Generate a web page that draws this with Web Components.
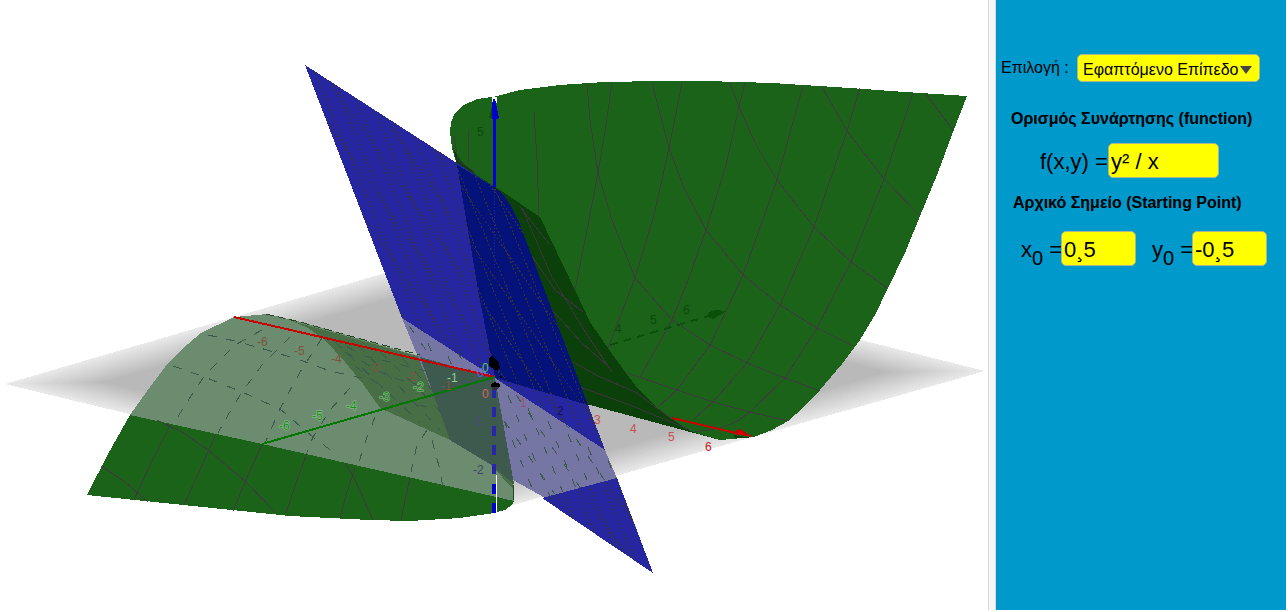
<!DOCTYPE html>
<html lang="el">
<head>
<meta charset="utf-8">
<meta name="viewport" content="width=device-width, initial-scale=1">
<title>Εφαπτόμενο Επίπεδο</title>
<style>
  body {
    margin: 0;
    background: white;
    color: black;
    font-family: "Liberation Sans", Arial, sans-serif;
  }
</style>
</head>
<body>
<split-view>
  <surface-plot></surface-plot>
  <side-panel slot="side">
    <option-picker label="Επιλογή :" options="Εφαπτόμενο Επίπεδο"></option-picker>
    <field-group heading="Ορισμός Συνάρτησης (function)" class="definition">
      <math-field value="y² / x" wide>f(x,y) =</math-field>
    </field-group>
    <field-group heading="Αρχικό Σημείο (Starting Point)" class="start">
      <math-field value="0¸5">x<sub>0</sub> =</math-field>
      <math-field value="-0¸5">y<sub>0</sub> =</math-field>
    </field-group>
  </side-panel>
</split-view>

<script>
class SplitView extends HTMLElement {
  constructor() {
    super();
    this.attachShadow({ mode: "open" }).innerHTML = `
      <style>
        :host {
          display: flex;
          box-sizing: border-box;
          min-height: 100vh;
          padding: 0 2px 2px 0;
        }
        main { flex: 1; min-width: 0; }
        .divider {
          flex: none;
          width: 6px;
          background: #f7f7f7;
          border-left: 1px solid #d8d8d8;
          border-right: 1px solid #dadada;
        }
        aside { display: flex; flex: none; width: 290px; }
      </style>
      <main><slot></slot></main>
      <div class="divider"></div>
      <aside><slot name="side"></slot></aside>`;
  }
}

class SidePanel extends HTMLElement {
  constructor() {
    super();
    this.attachShadow({ mode: "open" }).innerHTML = `
      <style>
        :host {
          display: flex;
          flex-direction: column;
          flex: 1;
          box-sizing: border-box;
          padding: 54px 5px 0;
          background: #0099cc;
        }
        ::slotted(.definition) { padding: 27px 0 0 10px; --row-pad: 29px; --row-gap: 14px; }
        ::slotted(.start) { padding: 15px 0 0 12px; --row-pad: 8px; --row-gap: 18px; }
      </style>
      <slot></slot>`;
  }
}

class OptionPicker extends HTMLElement {
  connectedCallback() {
    const options = this.getAttribute("options").split("|");
    this.attachShadow({ mode: "open" }).innerHTML = `
      <style>
        :host { display: flex; align-items: center; font-size: 16px; }
        label { width: 76px; }
        .box { display: grid; align-items: center; }
        select, svg { grid-area: 1 / 1; }
        select {
          appearance: none;
          box-sizing: border-box;
          width: 183px;
          height: 28px;
          padding: 2px 0 0 5px;
          border: 1px solid #a9b494;
          border-radius: 5px;
          background: #ffff00;
          color: black;
          font: inherit;
        }
        svg { justify-self: end; margin: 4px 8px 0 0; pointer-events: none; }
      </style>
      <label for="choice">${this.getAttribute("label")}</label>
      <div class="box">
        <select id="choice">${options.map((o) => `<option>${o}</option>`).join("")}</select>
        <svg width="12" height="8"><path d="M0 0H12L6 8Z" fill="#444"/></svg>
      </div>`;
  }
}

class FieldGroup extends HTMLElement {
  connectedCallback() {
    this.attachShadow({ mode: "open" }).innerHTML = `
      <style>
        :host { display: block; }
        h2 { margin: 0; font-size: 16px; line-height: 20px; white-space: nowrap; }
        .row {
          display: flex;
          gap: 16px;
          padding: var(--row-gap) 0 0 var(--row-pad);
        }
      </style>
      <h2>${this.getAttribute("heading")}</h2>
      <div class="row"><slot></slot></div>`;
  }
}

class MathField extends HTMLElement {
  connectedCallback() {
    const width = this.hasAttribute("wide") ? 111 : 75;
    const labelWidth = this.hasAttribute("wide") ? 68 : 40;
    this.attachShadow({ mode: "open" }).innerHTML = `
      <style>
        :host { display: flex; align-items: center; font-size: 22px; line-height: 26px; }
        label { width: ${labelWidth}px; padding-top: 2px; white-space: nowrap; }
        sub { font-size: 20px; line-height: 0; vertical-align: -8px; }
        input {
          box-sizing: border-box;
          width: ${width}px;
          height: 35px;
          padding: 2px 0 0 2px;
          border: 1px solid #a9b494;
          border-radius: 5px;
          background: #ffff00;
          color: black;
          font: inherit;
        }
      </style>
      <label for="field"></label>
      <input id="field" type="text" value="${this.getAttribute("value")}">`;
    const label = this.shadowRoot.querySelector("label");
    for (const node of this.childNodes) label.append(node.cloneNode(true));
  }
}

// outlines of the visible pieces, in plot units
const SHAPES = [
  ["#1b6319", "450,132 451,122 455,113 464,105 477,99 492,97 497,96 520,90 560,85 604,82 660,81 705,81 772,83 850,88 905,92 967,96 953,132 937,175 920,216 905,253 888,288 875,315 860,340 842,364 820,390 804,407 788,421 772,430 754,437 720,440 590,405 495,378 478,290 457,165 452,148"],
  ["#0c400b", "453,147 460,160 478,176 500,190 540,217 575,290 590,322 612,354 635,385 655,406 672,419 690,431 720,440 590,405 495,378 478,290 457,165"],
  ["#1b6319", "87,495 108,454 130,415 262,444 514,501 513,504 505,510 494,513 460,518 410,521 370,520 290,516"],
  ["#6b8c6e", "130,415 147,391 165,367 182,349 201,333 234,317 268,314 305,323 495,378 505,440 514,490 514,501 262,444"],
  ["#486e46", "292,321 495,378 514,490 490,464 450,440 380,408 363,384 345,362 325,340 308,328"],
  ["#7676a4", "402,318 495,378 605,450 617,478 545,498 515,481 452,440"],
  ["#3e5a4e", "420,357 495,378 514,484 490,464 450,440"],
  ["#2626a0", "305,65 494,187 503,194 511,206 519,222 555,318 605,450 495,378 402,318"],
  ["#2626a0", "617,478 653,573 542,498"],
  ["#05127a", "457,165 494,187 503,194 511,206 519,222 555,318 588,405 495,378 478,290"],
];

const CURVES = [
  "587,83 590,120 598,173 612,220 635,278 672,320 710,345 747,363 785,378 820,391",
  "652,83 669,148 685,190 706,230 743,275 780,305 817,328 853,346",
  "730,83 739,107 756,145 777,180 814,227 851,262 887,288",
  "822,87 847,131 884,179 920,216",
  "926,94 953,130",
  "612,83 606,125 598,173 587,230 575,290",
  "682,83 669,148 654,215 635,278 608,348",
  "745,83 739,107 726,165 706,230 688,280 672,320 640,377",
  "803,86 777,180 743,275 710,345 677,390 658,407",
  "860,88 847,131 814,227 780,305 747,363 713,402 693,420",
  "913,93 884,179 851,262 817,328 785,378 750,412 736,422 720,428 695,432",
  "627,373 677,390 713,402 750,412 788,421",
  "534,112 537,160 539,216",
  "468,131 469,162",
  "454,135 458,160 475,172",
  "520,207 550,245",
  "522,208 551,275 584,330 612,372",
  "532,256 555,290 583,312",
  "552,310 582,343 608,366",
  "573,362 598,376 635,392 672,419",
  "574,385 630,405 690,430",
  "101,466 125,482 148,502",
  "157,420 182,432 208,450 245,481 275,512",
  "170,425 150,465 134,500",
  "216,434 200,470 184,505",
  "262,444 246,480 233,511",
  "307,453 296,483 286,513",
  "355,468 346,495 340,518",
  "345,463 355,480 373,520",
  "410,478 404,505 401,520",
];

const HIDDEN_CURVES = [
  "208,335 235,341 267,350 300,360 330,371 362,378",
  "173,366 202,376 242,392 280,409 313,437 337,455",
  "262,330 235,345 205,375 185,405 176,420",
  "290,337 262,365 242,392 228,415 218,433",
  "322,338 300,372 280,409 265,443",
  "350,388 330,410 313,437 307,452",
  "375,417 366,440 358,465",
  "427,430 417,445 411,472",
  "432,440 440,470 444,493",
  "330,338 365,356 410,367 450,377",
  "345,352 390,377 430,388 475,393",
  "355,366 400,402 445,410 490,419",
  "335,342 375,380 420,423",
  "358,346 396,383 440,430",
  "380,352 415,385 470,443",
  "402,358 442,400 492,455",
  "425,362 465,410 505,465",
  "450,369 480,410 508,450",
];

const LABELS = [
  ["#7a5540", "-6", 257, 346], ["#7a5540", "-5", 294, 355],
  ["#7a5540", "-4", 331, 363], ["#7a5540", "-3", 369, 372],
  ["#7a5540", "-2", 406, 381], ["#7a5540", "-1", 441, 390],
  ["#139013", "-6", 279, 430, 1], ["#139013", "-5", 312, 420, 1],
  ["#139013", "-4", 346, 410, 1], ["#139013", "-3", 379, 401, 1],
  ["#139013", "-2", 413, 391, 1], ["#8fd08f", "-1", 447, 382],
  ["#50c850", "0", 482, 372], ["#5a5aff", "0", 477, 377],
  ["#d86060", "0", 482, 398], ["#4a4e78", "-1", 472, 425],
  ["#3f466c", "-2", 473, 474], ["#96507a", "1", 520, 407],
  ["#101060", "2", 557, 415], ["#c85050", "3", 594, 424],
  ["#c85050", "4", 630, 433], ["#c85050", "5", 668, 441],
  ["#c81818", "6", 705, 451], ["#0b4a0b", "4", 615, 333],
  ["#0b4a0b", "5", 650, 324], ["#0b4a0b", "6", 683, 314],
  ["#0b4a0b", "5", 477, 136],
];

class SurfacePlot extends HTMLElement {
  connectedCallback() {
    this.attachShadow({ mode: "open" }).innerHTML = `
      <style>
        :host { display: block; }
        svg { display: block; width: 100%; height: auto; }
        text { font-size: 12px; }
        .halo { paint-order: stroke; stroke: #9cc09c; stroke-width: 1px; }
        polyline, .mesh { fill: none; stroke-width: 1px; }
      </style>
      <svg viewBox="0 0 988 610" role="img" aria-label="z = y² / x" shape-rendering="crispEdges">
        <defs>
          <clipPath id="above"><polygon points="${SHAPES[7][1]}"/><polygon points="${SHAPES[8][1]}"/></clipPath>
          <clipPath id="below"><polygon points="${SHAPES[5][1]}"/></clipPath>
        </defs>
        ${this.ground()}
        ${SHAPES.slice(0, 5).map(this.shape).join("")}
        <g stroke="#443344" stroke-opacity=".85">${CURVES.map((c) => `<polyline points="${c}"/>`).join("")}</g>
        ${SHAPES.slice(5).map(this.shape).join("")}
        <g stroke="#3c5a4c" stroke-dasharray="9 10">${HIDDEN_CURVES.map((c) => `<polyline points="${c}"/>`).join("")}</g>
        <polyline points="266,314 300,322 350,336 420,355" stroke="#244424" stroke-dasharray="8 4"/>
        <polyline points="513,485 514,500" stroke="#244424"/>
        <g clip-path="url(#above)" stroke="#333333" stroke-dasharray="2 2">${this.mesh()}</g>
        <g clip-path="url(#below)" stroke="#3c5a4c" stroke-dasharray="8 13">${this.mesh()}</g>
        ${this.axes()}
        ${LABELS.map(([fill, text, x, y, halo]) =>
          `<text x="${x}" y="${y}" fill="${fill}"${halo ? ' class="halo"' : ""}>${text}</text>`).join("")}
      </svg>`;
  }

  shape([fill, points]) {
    return `<polygon fill="${fill}" points="${points}"/>`;
  }

  // the xy plane, fading out towards its border
  ground() {
    const corners = [[5, 384], [481, 245], [985, 371], [510, 506]];
    const steps = 14;
    let out = "";
    for (let i = 0; i <= steps; i++) {
      const k = 1 - (0.2 * i) / steps;
      const grey = Math.round(232 - (47 * i) / steps);
      const points = corners.map(([x, y]) => `${495 + (x - 495) * k},${376 + (y - 376) * k}`);
      out += `<polygon fill="rgb(${grey},${grey},${grey})" points="${points.join(" ")}"/>`;
    }
    return out;
  }

  // both families of parameter lines on the tangent plane
  mesh() {
    let d = "";
    // steep lines, one for each step along the top edge
    for (let i = 0; i < 18; i++) d += `M${315 + i * 20} ${72 + i * 13}l220 528`;
    // flatter lines, stacked down the plane
    for (let i = -5; i < 10; i++) d += `M290 ${24 + i * 43}l380 551`;
    return `<path class="mesh" d="${d}"/>`;
  }

  axes() {
    return `
      <path d="M234 317L495 377M672 418L740 434" stroke="#c80000" stroke-width="2"/>
      <path d="M735 431L740 429L753 437L733 434Z" fill="#c80000"/>
      <path d="M734 435L752 438L735 438Z" fill="#0c400b"/>
      <path d="M262 444L495 377" stroke="#007800" stroke-width="2"/>
      <path d="M610 345L712 315" stroke="#0a500a" stroke-width="2" stroke-dasharray="8 6"/>
      <path d="M708 313L715 310L727 311L713 319L708 317Z" fill="#0a500a"/>
      <path d="M494 116V187" stroke="#0000d0" stroke-width="3"/>
      <path d="M492 97h5v6h-5z" fill="white"/>
      <path d="M493 99H495L499 118L494 120L490 118Z" fill="#0000d0"/>
      <path d="M489 118L492 106V119Z" fill="#0a500a"/>
      <path d="M494 189V270" stroke="#2626a8" stroke-dasharray="1 2"/>
      <path d="M494 388V475" stroke="#2626a8" stroke-width="4" stroke-dasharray="10 9"/>
      <path d="M494 484V494M494 503V513" stroke="#0000d0" stroke-width="4"/>
      <path d="M496 475V512" stroke="white" stroke-width="1"/>
      <path d="M489 359L491 356L494 357L499 363L500 369L495 370L489 366Z"/>
      <path d="M491 384L495 382L500 384V387H491Z"/>
      <path d="M492 387H499L497 390H493Z" fill="#333"/>
      <path d="M500 376h2v2h-2z"/>`;
  }
}

customElements.define("split-view", SplitView);
customElements.define("side-panel", SidePanel);
customElements.define("option-picker", OptionPicker);
customElements.define("field-group", FieldGroup);
customElements.define("math-field", MathField);
customElements.define("surface-plot", SurfacePlot);
</script>
</body>
</html>
